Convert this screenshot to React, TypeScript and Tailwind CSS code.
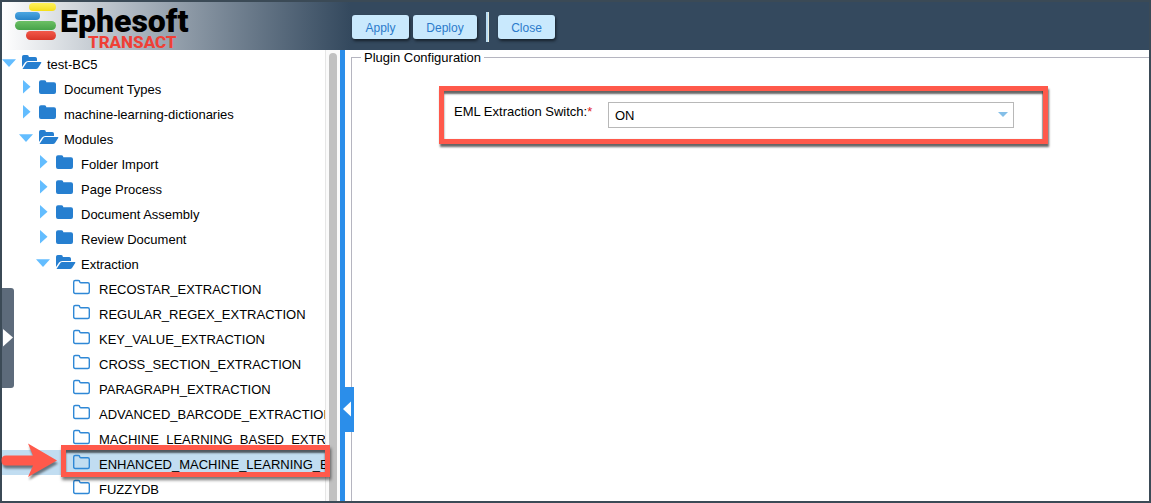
import { useState } from "react"
import { clsx } from "clsx"

type NodeKind = "open" | "closed" | "leaf"

interface TreeNode {
    label: string
    level: number
    kind: NodeKind
}

const nodes: TreeNode[] = [
    { label: "test-BC5", level: 0, kind: "open" },
    { label: "Document Types", level: 1, kind: "closed" },
    { label: "machine-learning-dictionaries", level: 1, kind: "closed" },
    { label: "Modules", level: 1, kind: "open" },
    { label: "Folder Import", level: 2, kind: "closed" },
    { label: "Page Process", level: 2, kind: "closed" },
    { label: "Document Assembly", level: 2, kind: "closed" },
    { label: "Review Document", level: 2, kind: "closed" },
    { label: "Extraction", level: 2, kind: "open" },
    { label: "RECOSTAR_EXTRACTION", level: 3, kind: "leaf" },
    { label: "REGULAR_REGEX_EXTRACTION", level: 3, kind: "leaf" },
    { label: "KEY_VALUE_EXTRACTION", level: 3, kind: "leaf" },
    { label: "CROSS_SECTION_EXTRACTION", level: 3, kind: "leaf" },
    { label: "PARAGRAPH_EXTRACTION", level: 3, kind: "leaf" },
    { label: "ADVANCED_BARCODE_EXTRACTION", level: 3, kind: "leaf" },
    { label: "MACHINE_LEARNING_BASED_EXTRACTION", level: 3, kind: "leaf" },
    { label: "ENHANCED_MACHINE_LEARNING_EXTRACTION", level: 3, kind: "leaf" },
    { label: "FUZZYDB", level: 3, kind: "leaf" },
]

const indents = ["pl-0", "pl-[17px]", "pl-[34px]", "pl-[51px]"]

function Toggle({ kind }: { kind: NodeKind }) {
    return (
        <svg viewBox="0 0 20 25" className="h-[25px] w-5 shrink-0 fill-[#63bdff]" aria-hidden="true">
            {kind === "open" && <path d="M0 9.2h14L7 17z" />}
            {kind === "closed" && <path d="M4 5v13.5l7.5-6.75z" />}
        </svg>
    )
}

function FolderIcon({ kind }: { kind: NodeKind }) {
    return (
        <svg viewBox="0 0 20 25" className="h-[25px] w-5 shrink-0" aria-hidden="true">
            {kind === "open" && (
                <g fill="#267fd0">
                    <path d="M0 17V6.8Q0 5 1.8 5H5.2Q6.8 5 6.8 6.5V7H13.2Q15 7 15 8.8V10.9H6.2Q4.2 10.9 3 12.5z" />
                    <path d="M0.5 19L4.2 13.3Q4.9 12.1 6.2 12.1H18.8Q19.7 12.1 19.2 13L16 17.9Q15.2 19 14 19z" />
                </g>
            )}
            {kind === "closed" && (
                <path
                    fill="#267fd0"
                    d="M0 7.2Q0 5.2 2 5.2H5.5Q7.3 5.2 7.3 7V7.2H15Q17 7.2 17 9.2V17Q17 19 15 19H2Q0 19 0 17z"
                />
            )}
            {kind === "leaf" && (
                <path
                    fill="none"
                    stroke="#2f88d6"
                    strokeWidth="1.4"
                    d="M0.7 7Q0.7 5.5 2.2 5.5H5.3Q6.8 5.5 6.8 7Q6.8 7.7 7.8 7.7H14.8Q16.3 7.7 16.3 9.2V17Q16.3 18.5 14.8 18.5H2.2Q0.7 18.5 0.7 17z"
                />
            )}
        </svg>
    )
}

function Logo() {
    return (
        <div className="flex h-12 items-start gap-1 pl-[13px]">
            <div className="flex w-[41px] flex-col gap-px pt-px">
                <span className="ml-3.5 h-2 w-[27px] rounded-full bg-linear-to-b from-[#fff25a] to-[#f5df10]" />
                <span className="h-2 w-[25px] rounded-full bg-linear-to-b from-[#4ba6e2] to-[#2784c8]" />
                <span className="h-[9px] w-[41px] rounded-full bg-linear-to-b from-[#6cc065] to-[#46a349]" />
                <span className="ml-[11px] h-[9px] w-[30px] rounded-full bg-linear-to-b from-[#f2584a] to-[#d93528]" />
            </div>
            <div className="flex flex-col font-['Roboto',sans-serif]">
                <span className="h-8 text-[32px] leading-[38px] font-black text-black">Ephesoft</span>
                <span className="pl-7 text-[17px] leading-4 font-extrabold text-[#ef4036]">TRANSACT</span>
            </div>
        </div>
    )
}

function ToolbarButton({ children, className }: { children: string; className: string }) {
    return (
        <button
            type="button"
            className={clsx(
                "h-6 rounded-[3px] bg-[#c9e9fd] pt-0.5 text-center text-xs text-[#2b7bcb] shadow-[1px_2px_3px_#17212b]",
                className
            )}
        >
            {children}
        </button>
    )
}

function Tree() {
    const [selected, setSelected] = useState("ENHANCED_MACHINE_LEARNING_EXTRACTION")

    return (
        <ul className="min-w-0 flex-1">
            {nodes.map((node) => {
                const isSelected = node.label === selected

                return (
                    <li key={node.label} className={clsx("relative", isSelected && "bg-[#c1ddf1]")}>
                        <button
                            type="button"
                            onClick={() => setSelected(node.label)}
                            className={clsx(
                                "flex h-[25px] w-full overflow-hidden text-left whitespace-nowrap",
                                indents[node.level]
                            )}
                        >
                            <Toggle kind={node.kind} />
                            <FolderIcon kind={node.kind} />
                            <span className={clsx("leading-[29px]", node.kind === "leaf" ? "pl-1.5" : "pl-[5px]")}>
                                {node.label}
                            </span>
                        </button>

                        {/* Callout on the selected plugin */}
                        {isSelected && (
                            <>
                                <div className="pointer-events-none absolute -top-[5px] -right-[5px] -bottom-0.5 left-[59px] z-10 border-5 border-[#ff594b] shadow-[1px_3px_3px_#0008,inset_0_3px_2px_#0009]" />
                                <svg
                                    viewBox="0 0 60 44"
                                    className="pointer-events-none absolute -top-2 -left-0.5 z-10 h-11 w-[60px] drop-shadow-[1px_3px_1px_#0007]"
                                    aria-hidden="true"
                                >
                                    <path
                                        fill="#ff594b"
                                        d="M6 13.5H33L28 1.5L57 18.5L28 35L33 23.5H6Q1.5 23.5 1.5 18.5T6 13.5z"
                                    />
                                </svg>
                            </>
                        )}
                    </li>
                )
            })}
        </ul>
    )
}

function PluginForm() {
    const [value, setValue] = useState("ON")

    return (
        <fieldset className="min-w-0 flex-1 border-t border-l border-[#b5b5c0]">
            <legend className="ml-[9px] px-[3px] leading-[15px]">Plugin Configuration</legend>
            <div className="mt-[21px] mr-[101px] ml-[87px] flex h-[58px] items-start border-5 border-[#ff594b] pt-[11px] pr-[29px] pl-2.5 shadow-[1px_3px_2px_#0009,inset_0_3px_2px_#0009,inset_-1px_0_1px_#0004]">
                <label htmlFor="eml-switch" className="w-[154px] shrink-0 leading-5">
                    EML Extraction Switch:<span className="text-[#e02020]">*</span>
                </label>
                <div className="relative min-w-0 flex-1">
                    <select
                        id="eml-switch"
                        value={value}
                        onChange={(e) => setValue(e.target.value)}
                        className="block h-[26px] w-full appearance-none border border-[#b8b8b8] bg-white px-1.5 pt-0.5 text-[13px] text-black"
                    >
                        <option>ON</option>
                        <option>OFF</option>
                    </select>
                    <svg
                        viewBox="0 0 10 5"
                        className="pointer-events-none absolute top-2.5 right-1.5 h-[5px] w-2.5 fill-[#84bfe8]"
                        aria-hidden="true"
                    >
                        <path d="M0 0h10L5 5z" />
                    </svg>
                </div>
            </div>
        </fieldset>
    )
}

export default function App() {
    return (
        <div className="flex min-h-screen flex-col border-2 border-[#3b4a56] bg-white font-['Liberation_Sans',Arial,sans-serif] text-[13px] text-black">
            <header className="flex h-12 bg-[#34495e]">
                <div className="w-[348px] shrink-0 bg-linear-to-r from-white to-[#34495e]">
                    <Logo />
                </div>
                <div className="flex items-center gap-1 pt-0.5 pl-0.5">
                    <ToolbarButton className="w-[57px]">Apply</ToolbarButton>
                    <ToolbarButton className="w-16">Deploy</ToolbarButton>
                    <span className="mx-[5px] h-[30px] w-[3px] border-r border-[#e4ecdf] bg-[#b9dcf3]" />
                    <ToolbarButton className="w-[57px]">Close</ToolbarButton>
                </div>
            </header>

            <div className="relative flex flex-1">
                <aside className="flex w-[338px] shrink-0">
                    <Tree />
                    {/* Scrollbar track */}
                    <div className="flex w-[15px] justify-center border-l border-[#e6e6e6] bg-[#fafafa] pt-[3px]">
                        <div className="w-2 rounded-t-full bg-[#c1c1c1]" />
                    </div>
                </aside>

                {/* Splitter between tree and form */}
                <div className="relative mr-1.5 w-[5px] shrink-0 bg-[#2b8eea]">
                    <button
                        type="button"
                        aria-label="Collapse tree"
                        className="absolute top-[337px] left-0.5 z-10 h-[45px] w-3 bg-[#2b8eea]"
                    >
                        <svg viewBox="0 0 12 45" className="h-[45px] w-3 fill-white" aria-hidden="true">
                            <path d="M9 14.5v15L1 22z" />
                        </svg>
                    </button>
                </div>

                <main className="flex min-w-0 flex-1">
                    <PluginForm />
                </main>

                {/* Drawer handle on the window edge */}
                <button
                    type="button"
                    aria-label="Open menu"
                    className="absolute top-[238px] left-0 h-[100px] w-3 rounded-r-[3px] bg-[#5d6b7b]"
                >
                    <svg viewBox="0 0 12 100" className="h-[100px] w-3 fill-white" aria-hidden="true">
                        <path d="M1 41v17.5L11 49.5z" />
                    </svg>
                </button>
            </div>
        </div>
    )
}
